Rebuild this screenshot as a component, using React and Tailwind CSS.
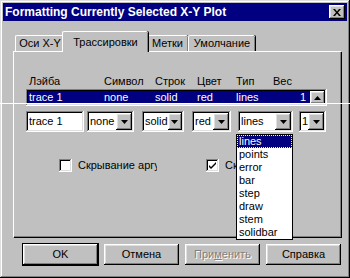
import { Fragment } from 'react'

const raised =
  'shadow-[inset_-1px_-1px_#000,inset_1px_1px_#fff,inset_-2px_-2px_#808080,inset_2px_2px_#dfdfdf]'
const sunken =
  'shadow-[inset_-1px_-1px_#fff,inset_1px_1px_#808080,inset_-2px_-2px_#dfdfdf,inset_2px_2px_#000]'

function Arrow({ up }) {
  return (
    <svg width="7" height="4" viewBox="0 0 7 4">
      {up ? <path d="M3.5 0 L7 4 L0 4 Z" fill="#000" /> : <path d="M0 0 L7 0 L3.5 4 Z" fill="#000" />}
    </svg>
  )
}

function Combo({ value, className }) {
  return (
    <div className={`flex h-[21px] items-center justify-between bg-white p-[2px] ${sunken} ${className}`}>
      <span className="pl-[1px] leading-none">{value}</span>
      <div className={`flex h-[17px] w-[16px] items-center justify-center bg-[#c0c0c0] ${raised}`}>
        <Arrow />
      </div>
    </div>
  )
}

function Tab({ label, active, className }) {
  return (
    <div
      className={`flex items-center justify-center border-l border-t border-white bg-[#c0c0c0] shadow-[inset_-1px_0_#808080,1px_0_#000] rounded-t-[2px] ${
        active ? 'relative z-10 h-[21px] mb-[-1px]' : 'h-[16px]'
      } ${className}`}
    >
      {label}
    </div>
  )
}

function Check({ checked, label }) {
  return (
    <div className="flex items-center gap-[6px]">
      <div className={`flex h-[13px] w-[13px] items-center justify-center bg-white ${sunken}`}>
        {checked && (
          <svg width="7" height="7" viewBox="0 0 7 7">
            <path d="M0 3 L2 5 L7 0 L7 2 L2 7 L0 5 Z" fill="#000" />
          </svg>
        )}
      </div>
      <span>{label}</span>
    </div>
  )
}

function Button({ children, def, disabled }) {
  return (
    <div
      className={`flex h-[21px] w-[75px] items-center justify-center bg-[#c0c0c0] ${raised} ${
        def ? 'outline outline-1 outline-black' : ''
      } ${disabled ? 'text-[#808080] [text-shadow:1px_1px_#fff]' : ''}`}
    >
      {children}
    </div>
  )
}

const types = ['lines', 'points', 'error', 'bar', 'step', 'draw', 'stem', 'solidbar']

export default function App() {
  return (
    <div
      className="relative h-[278px] w-[350px] overflow-hidden bg-[#c0c0c0] text-[11px] text-black shadow-[inset_-1px_-1px_#000,inset_1px_1px_#dfdfdf,inset_-2px_-2px_#808080,inset_2px_2px_#fff]"
      style={{ fontFamily: '"Liberation Sans", Arial, sans-serif' }}
    >
      {/* Title bar */}
      <div className="mx-[3px] mt-[3px] flex h-[18px] items-center justify-between bg-[#000080] pl-[2px] pr-[2px]">
        <span className="text-[12px] font-bold text-white">Formatting Currently Selected X-Y Plot</span>
        <div className={`flex h-[14px] w-[16px] items-center justify-center bg-[#c0c0c0] ${raised}`}>
          <svg width="8" height="7" viewBox="0 0 8 7">
            <path d="M0 0 L2 0 L4 2.5 L6 0 L8 0 L5 3.5 L8 7 L6 7 L4 4.5 L2 7 L0 7 L3 3.5 Z" fill="#000" />
          </svg>
        </div>
      </div>

      {/* Tabs */}
      <div className="ml-[15px] mt-[10px] flex h-[20px] items-end">
        <Tab label="Оси X-Y" className="w-[49px]" />
        <Tab label="Трассировки" active className="ml-[-2px] mr-[-2px] w-[86px]" />
        <Tab label="Метки" className="w-[42px]" />
        <Tab label="Умолчание" className="w-[67px]" />
      </div>

      {/* Panel */}
      <div className="ml-[13px] h-[186px] w-[328px] border-l border-t border-white shadow-[inset_-1px_-1px_#808080,1px_1px_#000] pt-[22px]">
        <div className="flex h-[14px] items-center pl-[15px]">
          <span className="w-[75px]">Лэйба</span>
          <span className="w-[51px]">Символ</span>
          <span className="w-[42px]">Строк</span>
          <span className="w-[39px]">Цвет</span>
          <span className="w-[37px]">Тип</span>
          <span>Вес</span>
        </div>
        <div className={`ml-[12px] mt-[1px] flex h-[17px] w-[301px] bg-white p-[2px] ${sunken}`}>
          <div className="flex h-[13px] flex-1 items-center bg-[#000080] pl-[1px] pr-[4px] text-white">
            <span className="w-[75px]">trace 1</span>
            <span className="w-[51px]">none</span>
            <span className="w-[42px]">solid</span>
            <span className="w-[39px]">red</span>
            <span className="flex-1">lines</span>
            <span>1</span>
          </div>
          <div className={`flex h-[13px] w-[15px] items-center justify-center bg-[#c0c0c0] ${raised}`}>
            <Arrow up />
          </div>
        </div>
        <div className="ml-[12px] mt-[5px] flex items-center">
          <div className={`flex h-[21px] w-[58px] items-center bg-white px-[3px] ${sunken}`}>trace 1</div>
          <Combo value="none" className="ml-[3px] w-[47px]" />
          <Combo value="solid" className="ml-[8px] w-[42px]" />
          <Combo value="red" className="ml-[8px] w-[39px]" />
          <Combo value="lines" className="ml-[7px] w-[55px]" />
          <Combo value="1" className="ml-[6px] w-[27px]" />
        </div>
        <div className="ml-[45px] mt-[25px] flex">
          <div className="w-[147px]">
            <Check label="Скрывание аргументов" />
          </div>
          <Check checked label="Скрывание" />
        </div>
      </div>

      {/* Buttons */}
      <div className="ml-[23px] mt-[7px] flex gap-[6px]">
        <Button def>OK</Button>
        <Button>Отмена</Button>
        <Button disabled>
          <span>
            При<u>м</u>енить
          </span>
        </Button>
        <Button>Справка</Button>
      </div>

      {/* Label clip for first checkbox text */}
      <div className="absolute left-[157px] top-[150px] h-[24px] w-[40px] bg-[#c0c0c0]" />

      {/* Dropped list */}
      <div className="absolute left-[236px] top-[134px] z-20 w-[57px] border border-black bg-white">
        {types.map((t, i) => (
          <Fragment key={t}>
            <div
              className={`h-[13px] pl-[2px] leading-[13px] ${
                i === 0 ? 'bg-[#000080] text-white outline-1 outline-dotted outline-offset-[-1px] outline-[#ffff80]' : ''
              }`}
            >
              {t}
            </div>
          </Fragment>
        ))}
      </div>

      {/* Redraw streak */}
      <div className="absolute left-0 top-[103px] h-[1px] w-[350px] bg-white" />
    </div>
  )
}
